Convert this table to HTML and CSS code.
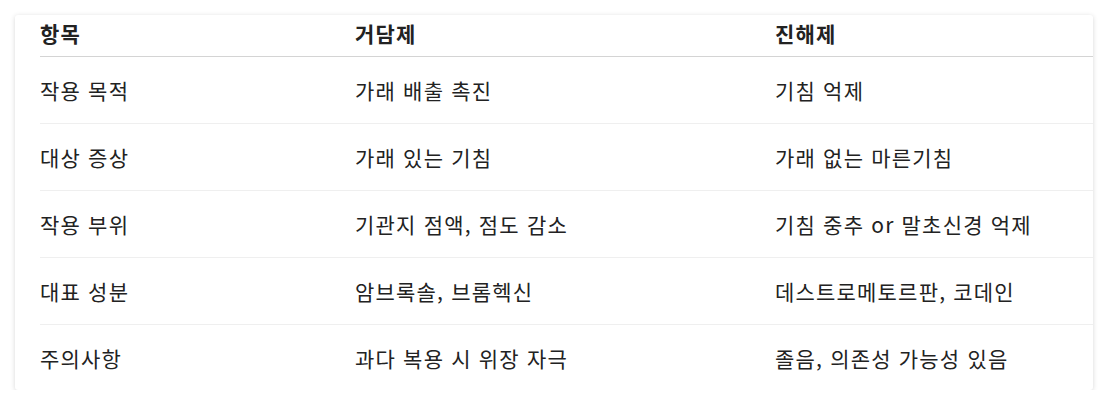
FILE: index.html
```html
<!DOCTYPE html>
<html lang="ko">
<head>
<meta charset="utf-8">
<link rel="stylesheet" href="styles.css">
</head>
<body>
<div class="card">
  <table class="compare">
    <colgroup>
      <col class="c1"><col class="c2"><col class="c3">
    </colgroup>
    <thead>
      <tr><th>항목</th><th>거담제</th><th>진해제</th></tr>
    </thead>
    <tbody>
      <tr><td>작용 목적</td><td>가래 배출 촉진</td><td>기침 억제</td></tr>
      <tr><td>대상 증상</td><td>가래 있는 기침</td><td>가래 없는 마른기침</td></tr>
      <tr><td>작용 부위</td><td>기관지 점액, 점도 감소</td><td>기침 중추 or 말초신경 억제</td></tr>
      <tr><td>대표 성분</td><td>암브록솔, 브롬헥신</td><td>데스트로메토르판, 코데인</td></tr>
      <tr><td>주의사항</td><td>과다 복용 시 위장 자극</td><td>졸음, 의존성 가능성 있음</td></tr>
    </tbody>
  </table>
</div>
</body>
</html>
```
FILE: styles.css
```css
html, body {
  margin: 0;
  padding: 0;
  background: #ffffff;
}
body {
  padding: 15px 15px 0 15px;
  font-family: "Noto Sans CJK KR", "Noto Sans", sans-serif;
  color: #222222;
}
.card {
  width: 1078px;
  height: 375px;
  background: #ffffff;
  border-radius: 3px;
  box-shadow: 0 1px 5px rgba(0, 0, 0, 0.16);
  padding-left: 25px;
  box-sizing: border-box;
}
.compare {
  width: 100%;
  border-collapse: collapse;
  table-layout: fixed;
  font-size: 21px;
  letter-spacing: 1.2px;
}
.c1 { width: 315px; }
.c2 { width: 420px; }
.compare th {
  text-align: left;
  font-weight: 700;
  height: 41px;
  padding: 0 0 5px 0;
  box-sizing: border-box;
  border-bottom: 1px solid #d4d4d4;
  vertical-align: middle;
}
.compare td {
  height: 67px;
  padding: 0;
  box-sizing: border-box;
  vertical-align: middle;
  font-weight: 400;
  border-bottom: 1px solid #efefef;
}
.compare tbody tr:last-child td {
  border-bottom: none;
}
```
